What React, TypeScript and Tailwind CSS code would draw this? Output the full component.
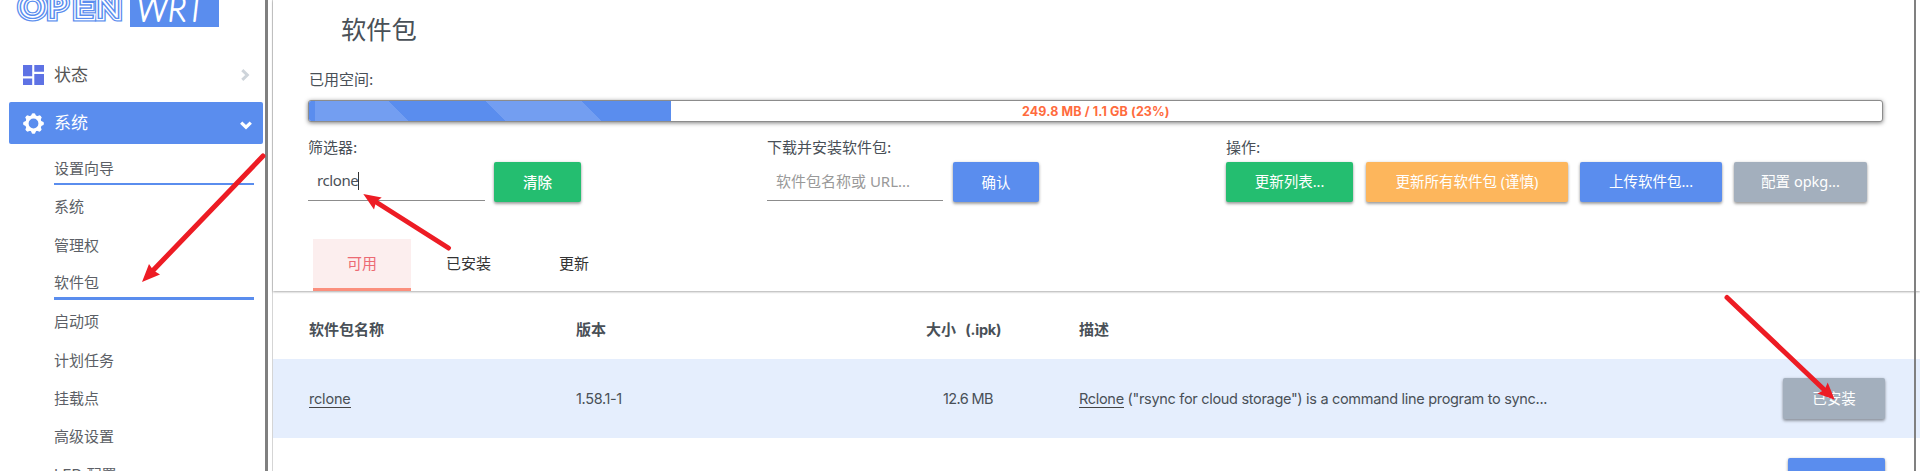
import React from "react";

const submenu = [
  { label: "设置向导", line: "border-b-2 border-[#5a8dee] h-[38px]", text: "leading-[33px]" },
  { label: "系统", line: "h-[38px]", text: "leading-[29px]" },
  { label: "管理权", line: "h-[38px]", text: "leading-[31px]" },
  { label: "软件包", line: "border-b-3 border-[#5a8dee] h-[39px]", text: "leading-[34px]" },
  { label: "启动项", line: "h-[38px]", text: "leading-[29px]" },
  { label: "计划任务", line: "h-[38px]", text: "leading-[31px]" },
  { label: "挂载点", line: "h-[38px]", text: "leading-[31px]" },
  { label: "高级设置", line: "h-[38px]", text: "leading-[31px]" },
  { label: "LED 配置", line: "h-[38px]", text: "leading-[31px]" },
];

const strokes = [
  { width: 9, color: "#5a8dee" },
  { width: 6.6, color: "#ffffff" },
  { width: 4.2, color: "#5a8dee" },
  { width: 1.4, color: "#ffffff" },
];

function Logo() {
  return (
    <svg width="265" height="28" viewBox="0 0 265 28" className="block shrink-0">
      <defs>
        <text id="open" x="17 41.500 64 83" y="16.500" fontFamily="Lato, sans-serif" fontWeight="100" fontSize="28" strokeLinejoin="miter" strokeMiterlimit="2" transform="scale(1.16 1)">
          OPEN
        </text>
      </defs>
      {strokes.map((s) => (
        <use key={s.width} href="#open" fill={s.color} stroke={s.color} strokeWidth={s.width} />
      ))}
      <rect x="130" y="-20" width="89" height="47" fill="#5a8dee" />
      <text x="137 168 187" y="21" fontFamily="Lato, sans-serif" fontWeight="100" fontStyle="italic" fontSize="33" fill="#fff" stroke="#fff" strokeWidth="2" strokeLinejoin="round">
        WRT
      </text>
    </svg>
  );
}

function Gear() {
  const teeth = [0, 45, 90, 135, 180, 225, 270, 315];
  return (
    <svg width="21" height="21" viewBox="-10.5 -10.5 21 21">
      <circle r="6.600" fill="none" stroke="#fff" strokeWidth="3.400" />
      {teeth.map((a) => (
        <path key={a} d="M-2.8 -7 L-1.5 -10 Q0 -10.7 1.5 -10 L2.8 -7Z" fill="#fff" transform={`rotate(${a})`} />
      ))}
    </svg>
  );
}

function Sidebar() {
  return (
    <aside className="flex h-full w-[268px] shrink-0 flex-col overflow-hidden border-r-3 border-[#808080] bg-white">
      <Logo />
      <div className="mt-[26px] flex h-[42px] shrink-0 items-center pr-[15px] pl-[23px]">
        <svg width="21" height="20" viewBox="0 0 21 20" fill="#5e72e4">
          <path d="M0 0h9.2v11.2H0zM11.3 0H21v6.8h-9.700zM0 13.400h9.200V20H0zM11.300 9H21v11h-9.700z" />
        </svg>
        <span className="ml-2.5 pt-0.5 text-[17px] text-[#555]">状态</span>
        <svg className="ml-auto" width="9" height="12" viewBox="0 0 9 12" fill="none" stroke="#ced4da" strokeWidth="3">
          <path d="M1.3 1.2 6.3 6 1.3 10.8" />
        </svg>
      </div>
      <div className="mt-1.5 ml-[9px] flex h-[42px] w-[254px] shrink-0 items-center rounded-xs bg-[#5a8dee] pr-[11px] pl-3.5 text-white">
        <Gear />
        <span className="ml-2.5 pt-0.5 text-[17px]">系统</span>
        <svg className="mt-1 ml-auto" width="12" height="9" viewBox="0 0 12 9" fill="none" stroke="#fff" strokeWidth="3.200">
          <path d="M1.2 1.6 6 6.2 10.8 1.6" />
        </svg>
      </div>
      <ul className="mt-[3px] ml-[54px] w-[200px]">
        {submenu.map((m) => (
          <li key={m.label} className={`flex items-end text-[15px] text-[#5c5f66] ${m.line}`}>
            <span className={`h-[31px] ${m.text}`}>{m.label}</span>
          </li>
        ))}
      </ul>
    </aside>
  );
}

function Btn({ children, className }: { children?: React.ReactNode; className: string }) {
  return (
    <button className={`shrink-0 rounded-xs text-center text-[14.5px] whitespace-nowrap text-white shadow-[0_2px_3px_rgba(0,0,0,0.35),0_0_3px_rgba(0,0,0,0.12)] ${className}`}>
      {children}
    </button>
  );
}

function Packages() {
  return (
    <section className="relative z-10 h-[291px] shrink-0 bg-white pl-[35px] shadow-[0_1px_2px_rgba(0,0,0,0.32)]">
      <h2 className="ml-[33px] h-[60px] text-[25.3px] leading-[60px]">软件包</h2>
      <div className="mt-[5px] h-[30px] pl-px text-[15px] leading-[30px]">已用空间:</div>
      <div className="mt-[5px] flex h-[22px] w-[1575px] overflow-hidden rounded-[3px] border border-[#8c8c8c] bg-white shadow-[0_1px_4px_rgba(0,0,0,0.5)]">
        <div className="w-[6px] bg-[#5a8dee]" />
        <div className="w-[356px] bg-[linear-gradient(45deg,#739ef1_0px,#739ef1_65.8px,#5a8dee_65.8px,#5a8dee_135px,#739ef1_135px,#739ef1_202.3px,#5a8dee_202.3px)]" />
        <div className="flex h-5 items-center pt-0.5 pl-[351px] text-[12.5px] font-bold tracking-[0.12px] text-[#ff6b3d]">249.8 MB / 1.1 GB (23%)</div>
      </div>
      <div className="mt-[10px] flex text-[15px]">
        <div className="w-[459px]">
          <div className="h-[30px] leading-[32px]">筛选器:</div>
          <div className="flex">
            <div className="flex h-[39px] w-[177px] items-center border-b border-[#8c8c8c] pb-px pl-[9px] font-['Noto_Sans','Noto_Sans_CJK_SC',sans-serif] text-[15px]">
              <span className="w-[41px] whitespace-nowrap tracking-[-0.4px]">rclone</span>
              <span className="h-[18px] w-px bg-[#333]" />
            </div>
            <Btn className="ml-[9px] h-10 w-[87px] bg-[#24be70] pt-0.5 font-medium">清除</Btn>
          </div>
        </div>
        <div className="w-[459px]">
          <div className="h-[30px] leading-[32px]">下载并安装软件包:</div>
          <div className="flex">
            <div className="flex h-[39px] w-[176px] items-center border-b border-[#8c8c8c] pl-[9px] font-['Noto_Sans','Noto_Sans_CJK_SC',sans-serif] text-[15px] text-[#999]">软件包名称或 URL...</div>
            <Btn className="ml-[10px] h-10 w-[86px] bg-[#5a8dee] pt-0.5">确认</Btn>
          </div>
        </div>
        <div>
          <div className="h-[30px] leading-[32px]">操作:</div>
          <div className="flex font-['Noto_Sans','Noto_Sans_CJK_SC',sans-serif]">
            <Btn className="h-10 w-[127px] bg-[#24be70]">更新列表...</Btn>
            <Btn className="ml-[13px] h-10 w-[202px] bg-[#fdb65c]">更新所有软件包 (谨慎)</Btn>
            <Btn className="ml-[12px] h-10 w-[142px] bg-[#5a8dee]">上传软件包...</Btn>
            <Btn className="ml-[12px] h-10 w-[133px] bg-[#a3afbd]">配置 opkg...</Btn>
          </div>
        </div>
      </div>
      <div className="mt-[37px] ml-[5px] flex h-[52px] text-[15px] leading-[50px] text-[#333]">
        <div className="w-[98px] border-b-3 border-[#fb8f7d] bg-[#fceeee] text-center text-[#ec6a73]">可用</div>
        <div className="w-[113px] pl-[35px]">已安装</div>
        <div className="pl-[35px]">更新</div>
      </div>
    </section>
  );
}

function PackageTable() {
  const cols = "grid grid-cols-[267px_350px_153px_704px_102px] items-center pl-9 text-[15px]";
  const latin = "text-[14.5px]";
  return (
    <section className="flex grow flex-col bg-white">
      <div className={`h-[68px] pt-[11px] font-bold ${cols}`}>
        <span>软件包名称</span>
        <span>版本</span>
        <span className="flex">
          大小<span className="ml-[6px] text-[14.5px] tracking-[-0.2px]">&nbsp;(.ipk)</span>
        </span>
        <span>描述</span>
      </div>
      <div className={`h-[79px] shrink-0 bg-[#e5eefd] ${cols}`}>
        <span className={`${latin} tracking-[-0.2px]`}>
          <span className="border-b border-[#444]">rclone</span>
        </span>
        <span className={`${latin} tracking-[-0.35px]`}>1.58.1-1</span>
        <span className={`${latin} pl-[17px] tracking-[-0.6px]`}>12.6 MB</span>
        <span className={`${latin} tracking-[-0.31px] whitespace-nowrap`}>
          <span className="border-b border-[#444]">Rclone</span> ("rsync for cloud storage") is a command line program to sync...
        </span>
        <Btn className="h-[41px] w-[102px] bg-[#a3afbd]">已安装</Btn>
      </div>
      <div className="mt-5 flex pl-[1515px]">
        <Btn className="h-10 w-[97px] bg-[#5a8dee]" />
      </div>
    </section>
  );
}

function Arrows() {
  return (
    <svg className="pointer-events-none absolute inset-0 z-20" width="1920" height="471" fill="#ed1c24" stroke="#ed1c24">
      <g strokeWidth="5" strokeLinecap="round">
        <path d="M263 156 152 271.5M448.500 248 376 202M1727 297.500 1825 390.500" />
      </g>
      <g stroke="none">
        <path d="M142 282 149 264 153.500 270.500 160 274.500Z" />
        <path d="M363.300 194 381.700 197.500 376 202 374 209.500Z" />
        <path d="M1834.700 399.700 1817.300 393.500 1824.500 390 1827.700 382.500Z" />
      </g>
    </svg>
  );
}

export default function App() {
  return (
    <div className="relative flex h-[471px] w-[1920px] overflow-hidden bg-white font-['Inter','Noto_Sans_CJK_SC',sans-serif] text-[#495057]">
      <Sidebar />
      <div className="w-[5px] shrink-0 border-r border-[#d5d5d5] bg-white" />
      <main className="flex w-[1647px] shrink-0 flex-col">
        <Packages />
        <PackageTable />
      </main>
      <div className="absolute top-0 left-[1914px] z-10 h-full w-0.5 bg-[#808080]" />
      <Arrows />
    </div>
  );
}
